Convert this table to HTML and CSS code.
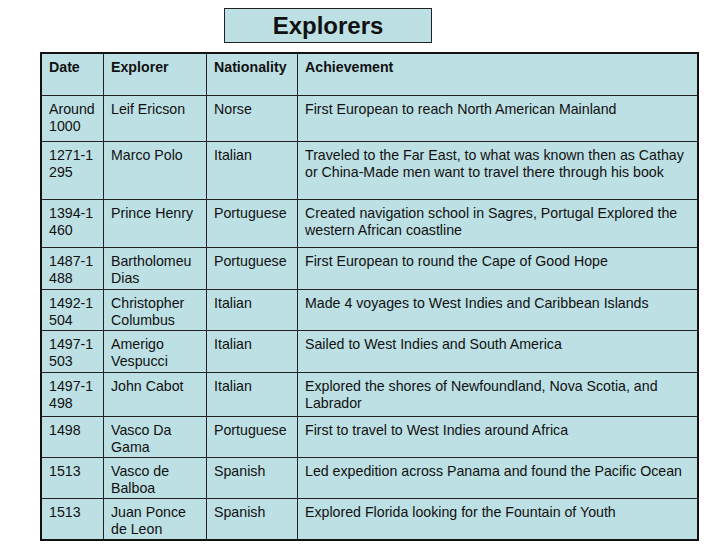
FILE: index.html
```html
<!DOCTYPE html>
<html>
<head>
<meta charset="utf-8">
<link rel="stylesheet" href="styles.css">
</head>
<body>
<div class="page">
  <div class="title">Explorers</div>
  <table class="explorers">
    <colgroup>
      <col class="c1"><col class="c2"><col class="c3"><col class="c4">
    </colgroup>
    <tr class="h42 head"><td>Date</td><td>Explorer</td><td>Nationality</td><td>Achievement</td></tr>
    <tr class="h46"><td>Around<br>1000</td><td>Leif Ericson</td><td>Norse</td><td>First European to reach North American Mainland</td></tr>
    <tr class="h58"><td>1271-1<br>295</td><td>Marco Polo</td><td>Italian</td><td>Traveled to the Far East, to what was known then as Cathay<br>or China-Made men want to travel there through his book</td></tr>
    <tr class="h48"><td>1394-1<br>460</td><td>Prince Henry</td><td>Portuguese</td><td>Created navigation school in Sagres, Portugal Explored the<br>western African coastline</td></tr>
    <tr class="h42"><td>1487-1<br>488</td><td>Bartholomeu<br>Dias</td><td>Portuguese</td><td>First European to round the Cape of Good Hope</td></tr>
    <tr class="h41"><td>1492-1<br>504</td><td>Christopher<br>Columbus</td><td>Italian</td><td>Made 4 voyages to West Indies and Caribbean Islands</td></tr>
    <tr class="h42"><td>1497-1<br>503</td><td>Amerigo<br>Vespucci</td><td>Italian</td><td>Sailed to West Indies and South America</td></tr>
    <tr class="h44"><td>1497-1<br>498</td><td>John Cabot</td><td>Italian</td><td>Explored the shores of Newfoundland, Nova Scotia, and<br>Labrador</td></tr>
    <tr class="h41"><td>1498</td><td>Vasco Da<br>Gama</td><td>Portuguese</td><td>First to travel to West Indies around Africa</td></tr>
    <tr class="h41"><td>1513</td><td>Vasco de<br>Balboa</td><td>Spanish</td><td>Led expedition across Panama and found the Pacific Ocean</td></tr>
    <tr class="h40 last"><td>1513</td><td>Juan Ponce<br>de Leon</td><td>Spanish</td><td>Explored Florida looking for the Fountain of Youth</td></tr>
  </table>
</div>
</body>
</html>
```
FILE: styles.css
```css
html, body {
  margin: 0;
  padding: 0;
  background: #ffffff;
}
.page {
  padding-top: 8px;
  font-family: "Liberation Sans", Arial, sans-serif;
  color: #111;
}
.title {
  margin-left: 224px;
  width: 206px;
  height: 33px;
  border: 1px solid #222;
  background: #bde0e4;
  font-weight: bold;
  font-size: 24px;
  line-height: 33px;
  text-align: center;
  color: #111;
}
.explorers {
  margin-top: 9px;
  margin-left: 40px;
  border-collapse: separate;
  border-spacing: 0;
  border: 2px solid #111;
  table-layout: fixed;
  width: 659px;
  background: #bde0e4;
  font-size: 14.2px;
  line-height: 17px;
}
.c1 { width: 62px; }
.c2 { width: 103px; }
.c3 { width: 91px; }
.c4 { width: 399px; }
.explorers td {
  box-sizing: border-box;
  vertical-align: top;
  padding: 5px 0 0 7px;
  border-right: 1px solid #222;
  border-bottom: 1px solid #222;
  white-space: nowrap;
  overflow: hidden;
}
.explorers td:last-child { border-right: none; }
.explorers tr.last td { border-bottom: none; }
.head td { font-weight: bold; }
.h40 { height: 40px; }
.h41 { height: 41px; }
.h42 { height: 42px; }
.h44 { height: 44px; }
.h46 { height: 46px; }
.h48 { height: 48px; }
.h58 { height: 58px; }
```
